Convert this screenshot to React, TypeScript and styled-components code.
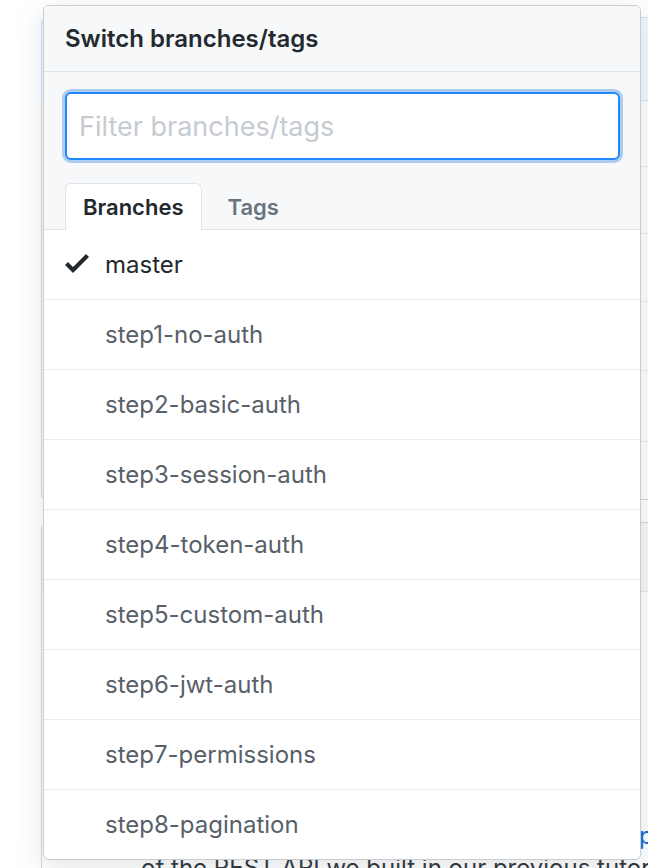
import React from "react";
import styled, { createGlobalStyle } from "styled-components";

const GlobalStyle = createGlobalStyle`
  html, body {
    margin: 0;
    padding: 0;
    background: #ffffff;
    overflow: hidden;
  }
  body {
    font-family: Inter, "Noto Sans", "Liberation Sans", sans-serif;
    color: #24292e;
  }
`;

const Page = styled.div`
  position: relative;
  width: 648px;
  height: 868px;
  overflow: hidden;
  background: #fff;
`;

/* ---------- the repository page underneath ---------- */

const RepoColumn = styled.div`
  display: flex;
  flex-direction: column;
  margin-left: 41px;
  padding-top: 17px;
  width: 720px;
`;

const CommitTease = styled.div`
  height: 82px;
  background: #f1f8ff;
  border: 1px solid #c8e1ff;
  border-radius: 6px 6px 0 0;
`;

const FileList = styled.div`
  border: 1px solid #d1d5da;
  border-top: none;
  border-radius: 0 0 6px 6px;
  overflow: hidden;
`;

const FileRow = styled.div<{ h: number }>`
  height: ${(p) => p.h}px;
  border-top: 1px solid #eaecef;

  &:first-child {
    border-top: none;
  }
`;

const ReadmeBox = styled.div`
  margin-top: 22px;
  border: 1px solid #d1d5da;
  border-radius: 6px 6px 0 0;
  border-bottom: none;
`;

const ReadmeHeader = styled.div`
  height: 68px;
  background: #f6f8fa;
  border-bottom: 1px solid #e1e4e8;
`;

const ReadmeBody = styled.div`
  padding: 228px 0 0 99px;
  font-size: 24px;
  line-height: 32px;
  color: #24292e;
  white-space: nowrap;
`;

const ReadmeLine = styled.div`
  display: flex;
`;

const LeadText = styled.span`
  width: 498px;
  overflow: hidden;
`;

const Link = styled.span`
  color: #0366d6;
`;

/* ---------- the branch switcher ---------- */

const Menu = styled.div`
  position: absolute;
  top: 5px;
  left: 43px;
  width: 598px;
  box-sizing: border-box;
  border: 1px solid #c9cdd2;
  border-radius: 6px;
  background: #fff;
  overflow: hidden;
  box-shadow: 0 8px 28px rgba(140, 149, 159, 0.25);
`;

const MenuHeader = styled.div`
  height: 65px;
  display: flex;
  align-items: center;
  padding: 0 21px;
  background: #f6f8fa;
  border-bottom: 1px solid #e1e4e8;
`;

const MenuTitle = styled.span`
  font-size: 24px;
  font-weight: 600;
  color: #24292e;
`;

const FilterArea = styled.div`
  background: #f6f8fa;
  padding: 20px 20px 0 21px;
  border-bottom: 1px solid #e1e4e8;
`;

const FilterInput = styled.input`
  display: block;
  width: 100%;
  height: 68px;
  box-sizing: border-box;
  padding: 0 12px;
  border: 2px solid #2188ff;
  border-radius: 6px;
  outline: none;
  box-shadow: 0 0 0 3px rgba(3, 102, 214, 0.3);
  font-family: inherit;
  font-size: 27px;
  color: #24292e;
  caret-color: #24292e;
  background: #fff;

  &::placeholder {
    color: #c6cbd1;
  }
`;

const Tabs = styled.div`
  display: flex;
  gap: 8px;
  margin-top: 23px;
  margin-bottom: -1px;
`;

const Tab = styled.div<{ selected?: boolean }>`
  height: 47px;
  box-sizing: border-box;
  display: flex;
  align-items: center;
  padding: 0 17px;
  font-size: 22px;
  font-weight: 600;
  border: 1px solid ${(p) => (p.selected ? "#e1e4e8" : "transparent")};
  border-bottom: none;
  border-radius: 6px 6px 0 0;
  background: ${(p) => (p.selected ? "#fff" : "transparent")};
  color: ${(p) => (p.selected ? "#24292e" : "#6a737d")};
`;

const BranchList = styled.div`
  display: flex;
  flex-direction: column;
`;

const BranchItem = styled.div<{ current?: boolean }>`
  height: 69px;
  display: flex;
  align-items: center;
  padding-left: 21px;
  border-bottom: 1px solid #eaecef;
  font-size: 24px;
  color: ${(p) => (p.current ? "#24292e" : "#586069")};

  &:last-child {
    border-bottom: none;
  }
`;

const CheckSlot = styled.span`
  width: 24px;
  height: 32px;
  margin-right: 16px;
  margin-top: -4px;
  display: flex;
  color: #24292e;
`;

const CheckIcon = () => (
  <svg width="24" height="32" viewBox="0 0 12 16" fill="currentColor">
    <path d="M12 5l-8 8-4-4 1.5-1.5L4 10l6.5-6.5L12 5z" />
  </svg>
);

const branches = [
  "master",
  "step1-no-auth",
  "step2-basic-auth",
  "step3-session-auth",
  "step4-token-auth",
  "step5-custom-auth",
  "step6-jwt-auth",
  "step7-permissions",
  "step8-pagination",
];

const App: React.FC = () => {
  const current = "master";
  return (
    <Page>
      <GlobalStyle />
      <RepoColumn>
        <CommitTease />
        <FileList>
          {[65, 66, 67, 68, 70, 57].map((h, i) => (
            <FileRow key={i} h={h} />
          ))}
        </FileList>
        <ReadmeBox>
          <ReadmeHeader />
          <ReadmeBody>
            <ReadmeLine>
              <LeadText>The code in this repository accompanies the</LeadText>
              <Link>previous</Link>
            </ReadmeLine>
            <ReadmeLine>of the REST API we built in our previous tutorial</ReadmeLine>
          </ReadmeBody>
        </ReadmeBox>
      </RepoColumn>

      <Menu>
        <MenuHeader>
          <MenuTitle>Switch branches/tags</MenuTitle>
        </MenuHeader>
        <FilterArea>
          <FilterInput placeholder="Filter branches/tags" autoFocus />
          <Tabs>
            <Tab selected>Branches</Tab>
            <Tab>Tags</Tab>
          </Tabs>
        </FilterArea>
        <BranchList>
          {branches.map((name) => (
            <BranchItem key={name} current={name === current}>
              <CheckSlot>{name === current && <CheckIcon />}</CheckSlot>
              {name}
            </BranchItem>
          ))}
        </BranchList>
      </Menu>
    </Page>
  );
};

export default App;
